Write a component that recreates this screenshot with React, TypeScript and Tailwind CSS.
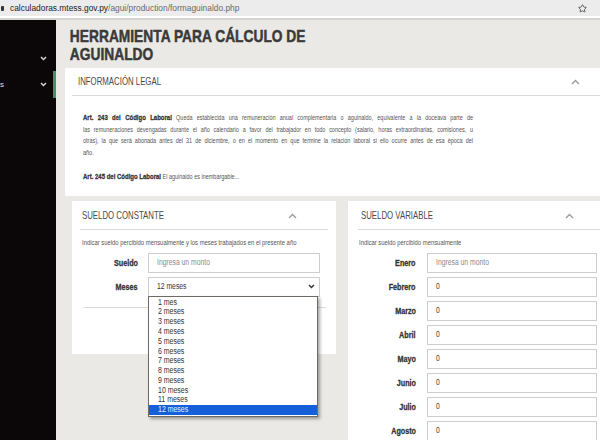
import React from 'react'
import { Star } from 'lucide-react'

// the reference is a horizontally squeezed screenshot, so text is narrowed with scale-x
const sans = "font-['Liberation_Sans','Arial',sans-serif]"

const months = ['Enero', 'Febrero', 'Marzo', 'Abril', 'Mayo', 'Junio', 'Julio', 'Agosto']
const options = [
  '1 mes', '2 meses', '3 meses', '4 meses', '5 meses', '6 meses',
  '7 meses', '8 meses', '9 meses', '10 meses', '11 meses', '12 meses',
]

function ChevronUp() {
  return (
    <svg width="9" height="6" viewBox="0 0 9 6">
      <path d="M1 5 L4.5 1.5 L8 5" stroke="#9b9b9b" strokeWidth="1.4" fill="none" />
    </svg>
  )
}

function ChevronDown({ color }: { color: string }) {
  return (
    <svg width="7" height="5" viewBox="0 0 7 5">
      <path d="M1 1 L3.5 3.6 L6 1" stroke={color} strokeWidth="1.4" fill="none" />
    </svg>
  )
}

function CardHeader({ title, right }: { title: string; right: string }) {
  return (
    <div className={`flex h-[29px] items-center justify-between border-b border-[#dddbd9] pt-[3px] ${right}`}>
      <span className={`${sans} inline-block origin-left scale-x-[0.68] whitespace-nowrap text-[11.5px] text-[#4a4a4a]`}>
        {title}
      </span>
      <ChevronUp />
    </div>
  )
}

function Label({ text, w }: { text: string; w: string }) {
  return (
    <div className={`${sans} ${w} shrink-0 text-right text-[9px] leading-[10px]`}>
      <span className="inline-block origin-right scale-x-[0.8] whitespace-nowrap font-bold text-[#333] [-webkit-text-stroke:0.3px_#333]">
        {text}
      </span>
    </div>
  )
}

function Field({ value, placeholder }: { value?: string; placeholder?: string }) {
  return (
    <div className="flex h-[20px] flex-1 items-center border border-[#cfcdcb] bg-white pl-[8px]">
      <span
        className={`${sans} inline-block origin-left scale-x-[0.8] whitespace-nowrap text-[8.5px] ${
          value ? 'text-[#444]' : 'text-[#8a8a8a]'
        }`}
      >
        {value ?? placeholder}
      </span>
    </div>
  )
}

export default function App() {
  return (
    <div className="flex h-[440px] w-[600px] flex-col overflow-hidden bg-[#ebe9e6]">
      {/* browser bar */}
      <div className="flex h-[16px] shrink-0 items-center bg-[#ececec]">
        <div className="ml-[1px] h-[5px] w-[3px] rounded-[1px] bg-[#333]" />
        <span className={`${sans} ml-[6px] whitespace-nowrap text-[8.4px] text-[#222]`}>
          calculadoras.mtess.gov.py<span className="text-[#6a6a6a]">/agui/production/formaguinaldo.php</span>
        </span>
        <Star className="ml-auto mr-[13px] h-[9px] w-[9px] text-[#333]" strokeWidth={2} />
      </div>
      <div className="h-[2px] shrink-0 bg-white" />
      <div className="h-[2px] shrink-0 bg-[#d5d3d0]" />

      <div className="flex min-h-0 flex-1">
        {/* sidebar */}
        <div className="w-[56px] shrink-0 bg-[#0b0607] pt-[25px]">
          <div className="flex h-[26px] items-center justify-end border-r-[3px] border-transparent pr-[6px]">
            <ChevronDown color="#d8d8d8" />
          </div>
          <div className="flex h-[27px] items-center justify-between border-r-[3px] border-[#3d9464] pr-[6px]">
            <span className={`${sans} text-[8px] text-[#e0e0e0]`}>s</span>
            <ChevronDown color="#d8d8d8" />
          </div>
        </div>

        {/* main */}
        <div className="min-w-0 flex-1 pl-[9px] pt-[8px]">
          <h1
            className={`${sans} origin-left scale-x-[0.81] whitespace-nowrap pl-[6px] text-[17px] font-bold leading-[18px] text-[#3b3a3a] [-webkit-text-stroke:0.5px_#3b3a3a]`}
          >
            HERRAMIENTA PARA CÁLCULO DE
            <br />
            AGUINALDO
          </h1>

          <div className="mt-[4px] bg-white pb-[13px]">
            <div className="ml-[7px] flex h-[28px] items-center justify-between border-b border-[#dddbd9] pl-[6px] pr-[20px]">
              <span className={`${sans} inline-block origin-left scale-x-[0.68] whitespace-nowrap text-[11.5px] text-[#4a4a4a]`}>
                INFORMACIÓN LEGAL
              </span>
              <ChevronUp />
            </div>
            <div
              className={`${sans} ml-[18px] w-[520px] origin-left scale-x-[0.75] pt-[16px] text-[7.3px] leading-[11.7px] text-[#555]`}
            >
              <p className="whitespace-nowrap text-justify [text-align-last:justify]">
                <b className="text-[8px] text-[#333] [-webkit-text-stroke:0.3px_#333]">Art. 243 del Código Laboral</b> Queda
                establecida una remuneración anual complementaria o aguinaldo, equivalente a la doceava parte de
              </p>
              <p className="whitespace-nowrap text-justify [text-align-last:justify]">
                las remuneraciones devengadas durante el año calendario a favor del trabajador en todo concepto (salario, horas
                extraordinarias, comisiones, u
              </p>
              <p className="whitespace-nowrap text-justify [text-align-last:justify]">
                otras), la que será abonada antes del 31 de diciembre, o en el momento en que termine la relación laboral si ello
                ocurre antes de esa época del
              </p>
              <p>año.</p>
              <p className="mt-[12px] whitespace-nowrap">
                <b className="text-[8px] text-[#333] [-webkit-text-stroke:0.3px_#333]">Art. 245 del Código Laboral</b> El
                aguinaldo es inembargable...
              </p>
            </div>
          </div>

          <div className="mt-[5px] flex items-start gap-[12px] pl-[7px]">
            {/* sueldo constante */}
            <div className="w-[264px] shrink-0 bg-white pb-[46px]">
              <div className="mx-[8px]">
                <CardHeader title="SUELDO CONSTANTE" right="pl-[2px] pr-[31px]" />
              </div>
              <p className={`${sans} mt-[8px] h-[10px] pl-[10px] text-[7px] leading-[10px] text-[#555]`}>
                <span className="inline-block origin-left scale-x-[0.84] whitespace-nowrap">
                  Indicar sueldo percibido mensualmente y los meses trabajados en el presente año
                </span>
              </p>
              <div className="mt-[5px] flex flex-col gap-[4px] pr-[16px]">
                <div className="flex items-center">
                  <Label text="Sueldo" w="w-[66px]" />
                  <div className="ml-[10px] flex flex-1">
                    <Field placeholder="Ingresa un monto" />
                  </div>
                </div>
                <div className="flex items-center">
                  <Label text="Meses" w="w-[66px]" />
                  <div className="relative ml-[10px] flex flex-1">
                    <div className="flex h-[20px] flex-1 items-center justify-between border border-[#cfcdcb] bg-white pl-[8px] pr-[4px]">
                      <span className={`${sans} inline-block origin-left scale-x-[0.8] whitespace-nowrap text-[8.5px] text-[#333]`}>
                        12 meses
                      </span>
                      <ChevronDown color="#333" />
                    </div>
                    <div className="absolute left-0 top-[19px] z-10 w-[170px] border border-[#6f6a66] bg-white py-[1px] shadow-[2px_2px_3px_rgba(0,0,0,0.35)]">
                      {options.map((o, i) => (
                        <div
                          key={o}
                          className={`${sans} h-[9.8px] pl-[9px] text-[8.5px] leading-[9.8px] ${
                            i === options.length - 1 ? 'bg-[#1560d8] text-[#e6ecff]' : 'text-[#333]'
                          }`}
                        >
                          <span className="inline-block origin-left scale-x-[0.82] whitespace-nowrap">{o}</span>
                        </div>
                      ))}
                    </div>
                  </div>
                </div>
              </div>
              <div className="ml-[11px] mr-[10px] mt-[10px] border-t border-[#dddbd9]" />
            </div>

            {/* sueldo variable */}
            <div className="min-w-0 flex-1 bg-white pb-[20px]">
              <div className="ml-[10px]">
                <CardHeader title="SUELDO VARIABLE" right="pl-[3px] pr-[26px]" />
              </div>
              <p className={`${sans} mt-[8px] h-[10px] pl-[11px] text-[7px] leading-[10px] text-[#555]`}>
                <span className="inline-block origin-left scale-x-[0.84] whitespace-nowrap">
                  Indicar sueldo percibido mensualmente
                </span>
              </p>
              <div className="mt-[5px] flex flex-col gap-[4px] pr-[3px]">
                {months.map((m, i) => (
                  <div key={m} className="flex items-center">
                    <Label text={m} w="w-[68px]" />
                    <div className="ml-[11px] flex flex-1">
                      {i === 0 ? <Field placeholder="Ingresa un monto" /> : <Field value="0" />}
                    </div>
                  </div>
                ))}
              </div>
            </div>
          </div>
        </div>
      </div>
    </div>
  )
}
